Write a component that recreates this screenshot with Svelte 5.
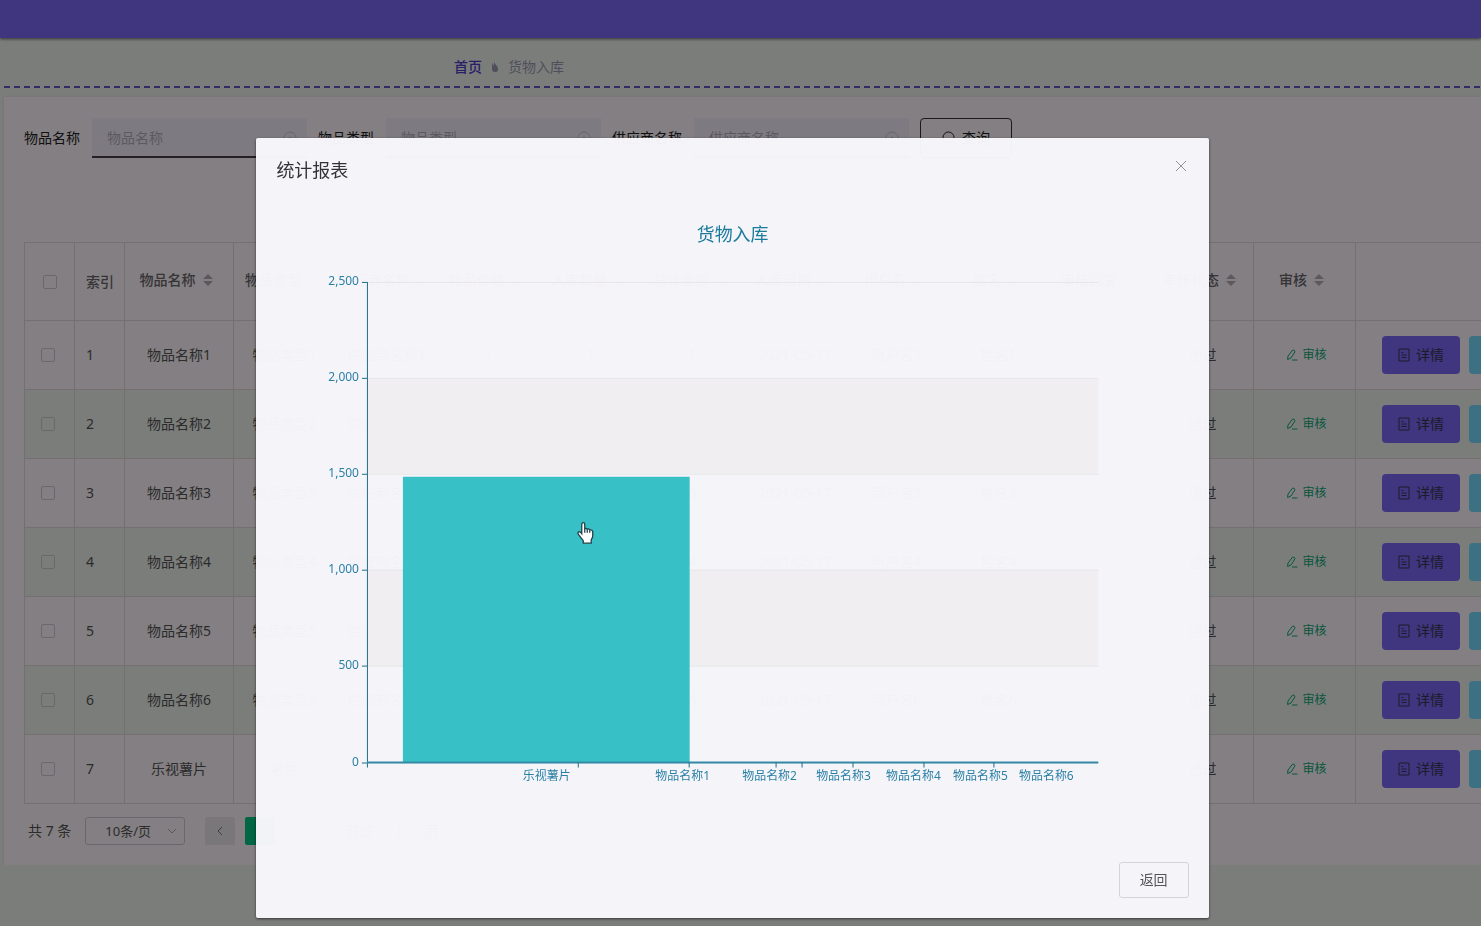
<script>
  const filters = ['物品名称', '物品类型', '供应商名称'];
  const columns = ['物品名称', '物品类型', '供应商名称', '物品价格', '入库数量', '总计金额', '入库日期', '用户名', '姓名', '审核回复', '审核状态', '审核'];
  const rows = [1, 2, 3, 4, 5, 6].map((n) => [`物品名称${n}`, `物品类型${n}`, `供应商名称${n}`, n, n, n, '2021-05-17', `用户名${n}`, `姓名${n}`, '', '通过']);
  rows.push(['乐视薯片', '薯片', '', '', '', '', '', '', '', '', '通过']);

  const yTicks = [
    { label: '2,500', y: 88 },
    { label: '2,000', y: 184 },
    { label: '1,500', y: 280 },
    { label: '1,000', y: 376 },
    { label: '500', y: 472 },
    { label: '0', y: 569 }
  ];
  const xTicks = [302, 413, 500, 526, 577, 648, 718];
  const xLabels = [
    { label: '乐视薯片', x: 271 },
    { label: '物品名称1', x: 407 },
    { label: '物品名称2', x: 494 },
    { label: '物品名称3', x: 568 },
    { label: '物品名称4', x: 638 },
    { label: '物品名称5', x: 705 },
    { label: '物品名称6', x: 771 }
  ];
</script>

<div class="page">
  <header class="topbar"></header>

  <nav class="crumbs">
    <a href="#home">首页</a>
    <svg width="8" height="12" viewBox="0 0 8 12"><path d="M1 2l2 3 0-4 2 3c2 2 2 3 2 5 0 1-1 2-3 2S1 10 1 8z" /></svg>
    <span>货物入库</span>
  </nav>

  <main class="panel">
    <form class="filters">
      {#each filters as name, i}
        <label for="filter-{i}">{name}</label>
        <div class="field">
          <input id="filter-{i}" type="text" placeholder={name} />
          <svg width="16" height="16" viewBox="0 0 16 16"><circle cx="8" cy="8" r="6" /><path d="M5.500 9.500L8 7l2.500 2.500" /></svg>
        </div>
      {/each}
      <button type="button" class="search">
        <svg width="14" height="14" viewBox="0 0 14 14"><circle cx="6.500" cy="6.500" r="5.500" /><path d="M10.500 10.500L13 13" /></svg>
        查询
      </button>
    </form>

    <div class="table-wrap">
      <table>
        <colgroup>
          <col class="c-check" /><col class="c-index" /><col class="c-name" />
          {#each columns.slice(1) as c}<col class="c-data" />{/each}
          <col class="c-ops" />
        </colgroup>
        <thead>
          <tr>
            <th><input type="checkbox" aria-label="全选" /></th>
            <th class="index">索引</th>
            {#each columns as c}
              <th class="sort-cell">
                <span class="sortable">{c}
                  <svg width="10" height="12" viewBox="0 0 10 12"><path d="M5 0l5 5H0zM5 12L0 7h10z" /></svg>
                </span>
              </th>
            {/each}
            <th></th>
          </tr>
        </thead>
        <tbody>
          {#each rows as row, i}
            <tr>
              <td class="check"><input type="checkbox" aria-label="选择第{i + 1}行" /></td>
              <td class="index">{i + 1}</td>
              {#each row as cell}<td class="data">{cell}</td>{/each}
              <td>
                <a class="audit" href="#audit">
                  <svg width="12" height="12" viewBox="0 0 12 12"><path d="M2 7L6.500 1.200Q8.500 .5 9 2.800L5 9l-3.400 1.500zM6 11h5.500" /></svg>
                  审核
                </a>
              </td>
              <td class="ops">
                <div>
                  <button type="button" class="detail">
                    <svg width="12" height="14" viewBox="0 0 12 14"><path d="M1 1h10v12H1zM3.500 4.500h2M3.500 7h5M3.500 9.500h5" /></svg>
                    详情
                  </button>
                  <button type="button" class="edit" aria-label="修改"></button>
                </div>
              </td>
            </tr>
          {/each}
        </tbody>
      </table>
    </div>

    <div class="pager">
      <span>共 7 条</span>
      <div class="size">
        <select aria-label="每页条数"><option>10条/页</option></select>
        <svg width="10" height="6" viewBox="0 0 10 6"><path d="M1 1l4 4 4-4" /></svg>
      </div>
      <button type="button" aria-label="上一页"><svg width="6" height="10" viewBox="0 0 6 10"><path d="M5 1L1 5l4 4" /></svg></button>
      <button type="button" class="current" aria-label="第1页"></button>
      <button type="button" aria-label="下一页"><svg width="6" height="10" viewBox="0 0 6 10"><path d="M1 1l4 4-4 4" /></svg></button>
      <label class="jump">前往 <input type="text" value="1" /> 页</label>
    </div>
  </main>
</div>

<div class="mask">
  <section class="dialog" role="dialog" aria-modal="true" aria-labelledby="dialog-title">
    <header>
      <h2 id="dialog-title">统计报表</h2>
      <button type="button" class="close" aria-label="关闭"><svg width="12" height="12" viewBox="0 0 12 12"><path d="M1 1l10 10M11 1L1 11" /></svg></button>
    </header>

    <svg class="chart" viewBox="0 0 913 610" role="img" aria-label="货物入库">
      <text class="title" x="457" y="47">货物入库</text>
      <g class="bands">
        <rect x="92" y="184" width="731" height="96" />
        <rect x="92" y="376" width="731" height="97" />
      </g>
      <g class="grid">
        {#each yTicks.slice(0, 5) as t}<rect x="92" y={t.y} width="731" height="1" />{/each}
      </g>
      <rect class="bar" x="127" y="283" width="287" height="286" />
      <g class="axis">
        <rect x="91" y="88" width="1" height="486" />
        <rect x="91" y="568" width="732" height="2" class="base" />
        {#each yTicks as t}<rect x="86" y={t.y} width="5" height="1" />{/each}
        {#each xTicks as x}<rect {x} y="569" width="1" height="5" />{/each}
      </g>
      {#each yTicks as t}<text class="y" x="83" y={t.y + 3}>{t.label}</text>{/each}
      {#each xLabels as t}<text class="x" x={t.x} y="586">{t.label}</text>{/each}
      <g class="cursor" transform="translate(301 328)">
        <path d="M5 2.500Q5 1 6.500 1T8 2.500V7q1.500-1 2.500.5 1.500-.8 2.500.7 2.500-.5 3 1.800V14q0 2-1.500 4v3.500H6.500V19Q4 16 1.500 12.500.5 10.500 2.500 10q1 0 2.500 2z" />
        <path d="M8 7v4M10.500 7.500V11M13 8.500V11" />
      </g>
    </svg>

    <footer><button type="button">返回</button></footer>
  </section>
</div>

<style>
  :global(body) {
    background: #f0f3f0;
    overflow: hidden;
  }
  .page, .mask, button, input, select {
    font-family: "Noto Sans", "Noto Sans CJK SC", sans-serif;
    font-size: 14px;
    line-height: 20px;
  }
  * { box-sizing: border-box; }
  svg { fill: none; stroke: currentColor; flex: none; }
  button { cursor: pointer; }

  .topbar {
    height: 38px;
    background: #7b69f8;
    box-shadow: 0 1px 3px rgba(0, 0, 0, .6);
  }
  .crumbs {
    display: flex;
    align-items: center;
    gap: 9px;
    height: 50px;
    margin-left: 4px;
    padding: 8px 0 0 450px;
    color: #9d98b0;
    background: repeating-linear-gradient(90deg, #6354c4 0 6px, transparent 6px 10px) left bottom / 100% 2px no-repeat;
  }
  .crumbs a { color: #4f3bc4; font-weight: 500; text-decoration: none; }
  .crumbs svg { fill: currentColor; stroke: none; }

  .panel {
    margin: 9px 0 0 4px;
    padding: 21px 0 20px 20px;
    background: #fff8fd;
    box-shadow: 0 0 3px rgba(0, 0, 0, .1);
  }
  .filters { display: flex; align-items: center; height: 40px; color: #222; white-space: nowrap; }
  .filters label { padding-right: 12px; }
  .field { position: relative; width: 215px; margin-right: 11px; }
  .field input {
    width: 100%;
    height: 40px;
    padding: 0 15px;
    border: 0;
    border-bottom: 2px solid #44404c;
    background: #f4eefc;
  }
  .field input::placeholder { color: #b4aebd; }
  .field svg { position: absolute; right: 9px; top: 12px; color: #ccc5d2; }
  .search {
    display: flex;
    align-items: center;
    justify-content: center;
    gap: 6px;
    width: 92px;
    height: 40px;
    border: 1px solid #333;
    border-radius: 4px;
    background: none;
    color: #222;
  }

  .table-wrap { margin-top: 84px; overflow: hidden; }
  table { width: 1700px; table-layout: fixed; border-collapse: collapse; color: #555; }
  .c-check { width: 50px; }
  .c-index { width: 50px; }
  .c-name { width: 109px; }
  .c-data { width: 102px; }
  th, td { border: 1px solid #e1dade; padding: 0; text-align: center; white-space: nowrap; }
  th { height: 78px; font-weight: 500; color: #6a666c; }
  td { height: 69px; }
  tbody tr:nth-child(even) { background: #f0f3f0; }
  .index { text-align: left; padding-left: 11px; }
  .check { padding-right: 4px; }
  .sort-cell { padding: 0 6px 4px 0; }
  .sortable { display: inline-flex; align-items: center; gap: 7px; }
  .sortable svg { fill: #b4aeb6; stroke: none; }
  input[type="checkbox"] {
    appearance: none;
    display: block;
    width: 14px;
    height: 14px;
    margin: 0 auto;
    border: 1px solid #d0c9d2;
    border-radius: 2px;
  }
  .audit {
    display: inline-flex;
    align-items: center;
    gap: 4px;
    padding-left: 4px;
    color: #10a878;
    font-size: 12px;
    text-decoration: none;
  }
  .ops div { display: flex; gap: 9px; padding-left: 26px; }
  .ops button {
    display: flex;
    align-items: center;
    justify-content: center;
    gap: 6px;
    width: 78px;
    height: 38px;
    border: 0;
    border-radius: 4px;
    color: #3a3450;
  }
  .ops .detail { background: #7b69f8; }
  .ops .edit { background: #74dcff; }

  .pager { display: flex; align-items: center; height: 28px; margin: 13px 0 0 4px; color: #555; }
  .size { position: relative; margin: 0 20px 0 14px; }
  .size select {
    appearance: none;
    width: 100px;
    height: 28px;
    padding: 0 19px;
    border: 1px solid #d0c9d2;
    border-radius: 3px;
    background: none;
    color: #555;
    font-size: 13px;
  }
  .size svg { position: absolute; right: 8px; top: 11px; color: #b4aeb6; }
  .pager button { width: 30px; height: 28px; margin-right: 10px; padding: 0; border: 0; border-radius: 2px; background: #ece7ec; color: #777; }
  .pager .current { background: #00c785; }
  .jump { margin-left: 20px; }
  .jump input { width: 44px; border: 0; background: none; color: #555; text-align: center; }

  .mask {
    position: fixed;
    inset: 0;
    padding: 138px 16px 0 0;
    background: rgba(0, 0, 0, .487);
  }
  .dialog {
    width: 65%;
    margin: 0 auto;
    padding: 20px;
    border-radius: 2px;
    background: rgba(249, 248, 253, .97);
    box-shadow: 0 1px 3px rgba(0, 0, 0, .6);
    color: #333;
  }
  .dialog header { display: flex; justify-content: space-between; height: 36px; }
  .dialog h2 { margin: 0; font-size: 18px; line-height: 24px; font-weight: 400; }
  .close { width: 16px; height: 16px; padding: 2px; border: 0; background: none; color: #909399; }
  .close svg { display: block; }
  .chart { display: block; width: 100%; stroke: none; }
  .chart text { font-size: 12px; fill: #2b80a6; }
  .chart .title { font-size: 18px; fill: #1b7b9d; text-anchor: middle; }
  .chart .y { text-anchor: end; }
  .chart .x { text-anchor: middle; }
  .bands { fill: #f0eef1; }
  .grid { fill: #e7e6e9; }
  .bar { fill: #37c1c6; }
  .axis { fill: #226d86; }
  .axis .base { fill: #3389a4; }
  .cursor { fill: #fff; stroke: #20404a; stroke-width: 1.3; }
  .dialog footer { display: flex; justify-content: flex-end; padding-top: 59px; }
  .dialog footer button {
    width: 70px;
    height: 36px;
    border: 1px solid #d6d3d8;
    border-radius: 3px;
    background: none;
    color: #555;
  }
</style>
